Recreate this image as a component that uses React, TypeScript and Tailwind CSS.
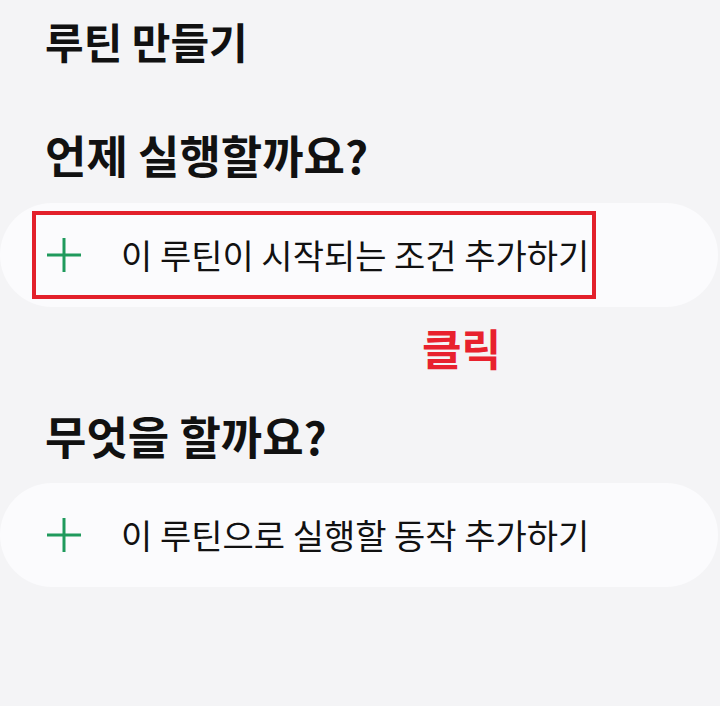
import React from "react";

const font = { fontFamily: '"Noto Sans CJK KR", "Noto Sans", sans-serif' };

function Plus() {
  return (
    <svg width="34" height="34" viewBox="0 0 34 34" className="shrink-0">
      <line x1="17" y1="0" x2="17" y2="34" stroke="#1f9a5c" strokeWidth="3" />
      <line x1="0" y1="17" x2="34" y2="17" stroke="#1f9a5c" strokeWidth="3" />
    </svg>
  );
}

function Card({ text, highlight }: { text: string; highlight?: boolean }) {
  return (
    <div className="w-[718px] h-[104px] rounded-[52px] bg-[#fbfbfd] flex items-center pl-[32px]">
      <div
        className={
          "w-[564px] h-[88px] border-4 flex items-center pl-[11px] " +
          (highlight ? "border-[#e3202b]" : "border-transparent")
        }
      >
        <Plus />
        <span className="ml-[40px] text-[34px] leading-none text-[#111] whitespace-nowrap">{text}</span>
      </div>
    </div>
  );
}

export default function App() {
  return (
    <div className="w-[720px] h-[706px] bg-[#f4f4f6] flex flex-col overflow-hidden" style={font}>
      <div className="h-[82px] flex items-center pl-[45px] text-[42px] font-bold leading-none text-[#111]">
        루틴 만들기
      </div>
      <div className="mt-[26px] h-[92px] flex items-center pl-[45px] text-[45px] font-bold leading-none text-[#111]">
        언제 실행할까요?
      </div>
      <div className="mt-[3px]">
        <Card text="이 루틴이 시작되는 조건 추가하기" highlight />
      </div>
      <div className="h-[80px] flex items-center pl-[422px] text-[43px] font-bold leading-none text-[#e8212e]">
        클릭
      </div>
      <div className="h-[96px] flex items-center pl-[45px] text-[45px] font-bold leading-none text-[#111]">
        무엇을 할까요?
      </div>
      <Card text="이 루틴으로 실행할 동작 추가하기" />
    </div>
  );
}
